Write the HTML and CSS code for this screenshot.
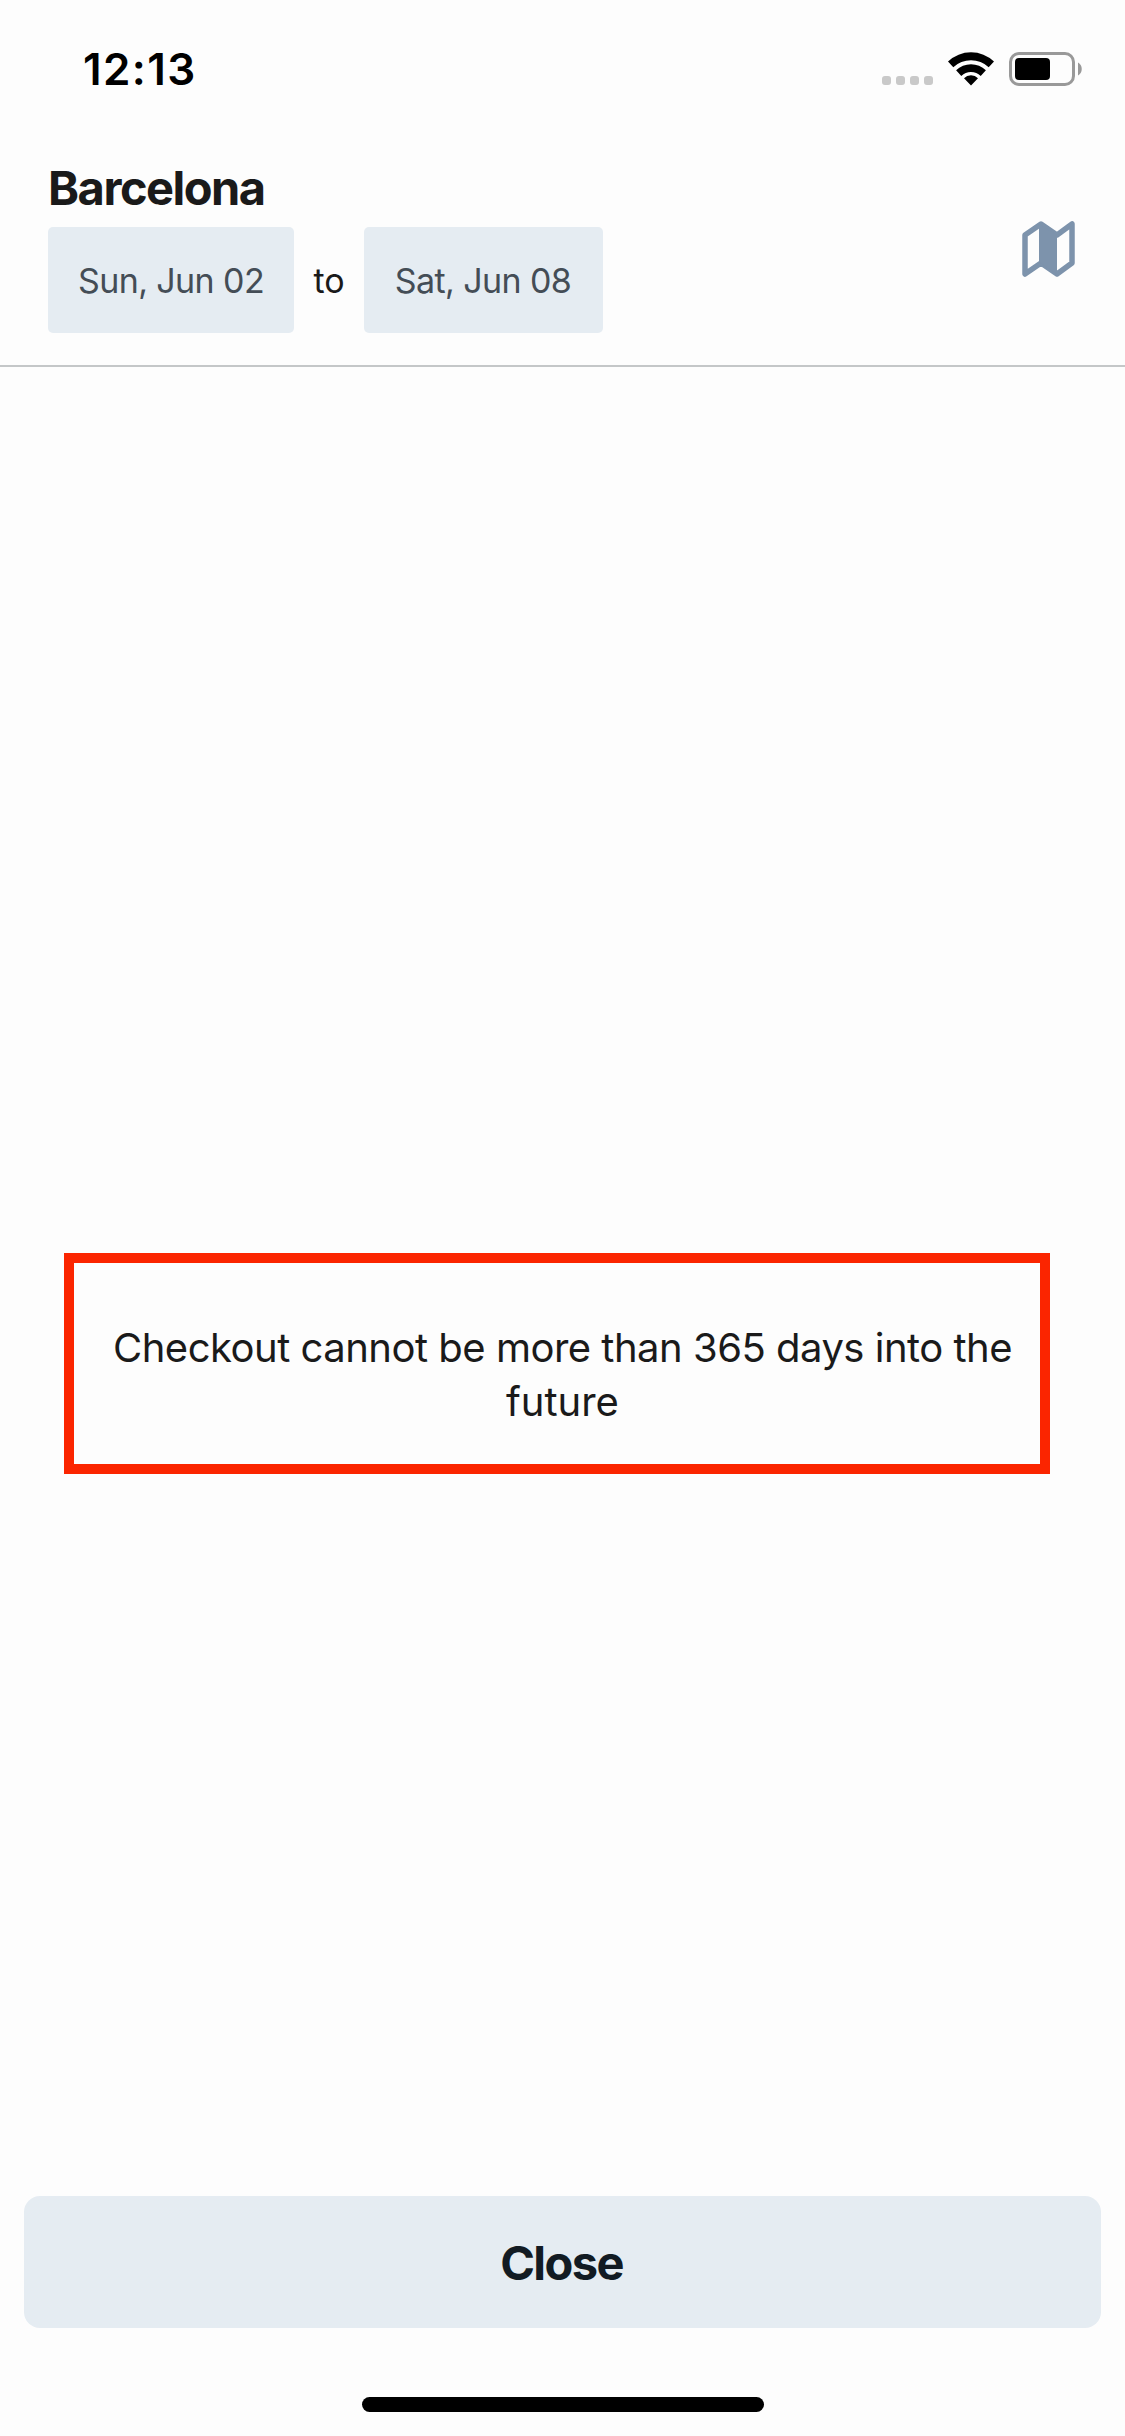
FILE: index.html
```html
<!DOCTYPE html>
<html lang="en">
<head>
<meta charset="utf-8">
<title>Barcelona</title>
<link rel="stylesheet" href="styles.css">
</head>
<body>
<div class="screen">
  <div class="status">
    <span class="time">12:13</span>
    <svg class="status-icons" width="204" height="38" viewBox="0 0 204 38" aria-hidden="true">
      <g fill="#c9c9c9">
        <rect x="0" y="26" width="9" height="9" rx="3"/>
        <rect x="14" y="26" width="9" height="9" rx="3"/>
        <rect x="28" y="26" width="9" height="9" rx="3"/>
        <rect x="42" y="26" width="9" height="9" rx="3"/>
      </g>
      <path d="M66 11.500A33.500 33.500 0 0 1 112 11.500L106.700 17.300A25.700 25.700 0 0 0 71.300 17.300ZM74.100 20.300A21.500 21.500 0 0 1 103.900 20.300L98.700 25.900A14 14 0 0 0 79.300 25.900ZM82 28.200A9.700 9.700 0 0 1 96 28.200L89 35.500Z" fill="#000"/>
      <rect x="128.500" y="3.500" width="63" height="31" rx="8.500" fill="none" stroke="#999" stroke-width="3"/>
      <rect x="133" y="8" width="35" height="22" rx="4" fill="#000"/>
      <path d="M196 12.500C201 15 201 23 196 25.500Z" fill="#999"/>
    </svg>
  </div>
  <header class="header">
    <div class="search">
      <h1 class="city">Barcelona</h1>
      <div class="dates">
        <span class="chip chip-from"><span>Sun, Jun 02</span></span>
        <span class="to">to</span>
        <span class="chip chip-until"><span>Sat, Jun 08</span></span>
      </div>
    </div>
    <svg class="map" width="54" height="58" viewBox="0 0 54 58" aria-hidden="true">
      <path d="M3 15L19 4L35 15L50 4V43L35 54L19 43L3 54Z" fill="none" stroke="#7d93ac" stroke-width="5.500" stroke-linejoin="round"/>
      <path d="M17 4L35 15V54L17 42Z" fill="#7d93ac"/>
    </svg>
  </header>
  <main class="content">
    <p class="message">Checkout cannot be more than 365 days into the<br><span class="last">future</span></p>
  </main>
  <footer class="footer">
    <button class="close" type="button">Close</button>
    <div class="home"></div>
  </footer>
</div>
</body>
</html>
```
FILE: styles.css
```css
* { box-sizing: border-box; }
body { margin: 0; background: #fdfdfd; font-family: Inter, "Liberation Sans", sans-serif; color: #1a1a1a; }
.screen { display: flex; flex-direction: column; height: 2436px; width: 1125px; }
.status { display: flex; justify-content: space-between; height: 132px; padding: 50px 39px 0 83px; }
.status-icons { flex: none; }
.time { font-size: 44px; font-weight: 600; line-height: 38px; letter-spacing: 1.4px; color: #000; }
.header { display: flex; justify-content: space-between; height: 235px; padding: 28px 49px 0 48px; border-bottom: 2px solid #c4c7c8; }
.city { margin: 0; font-size: 47px; font-weight: 700; line-height: 56px; height: 67px; letter-spacing: -1.5px; }
.dates { display: flex; align-items: center; height: 106px; font-size: 34px; }
.chip { display: flex; align-items: center; justify-content: center; height: 106px; border-radius: 5px; background: #e5ecf2; color: #444d56; letter-spacing: -0.6px; }
.chip-from { width: 246px; }
.chip-until { width: 239px; padding-right: 1px; }
.to { width: 70px; text-align: center; color: #1a1a1a; }
.map { margin-top: 60px; flex: none; }
.content { flex: 1; padding: 886px 75px 0 64px; }
.message { margin: 0; height: 221px; padding: 58px 0 0 11px; border: 10px solid #fb2500; text-align: center; font-size: 40px; line-height: 54px; letter-spacing: -0.5px; white-space: nowrap; }
.last { letter-spacing: 0; }
.footer { display: flex; flex-direction: column; align-items: center; height: 240px; padding: 0 24px; }
.close { width: 100%; height: 132px; padding: 0 2px 0 0; border: 0; border-radius: 16px; background: #e5ecf2; color: #121b23; font: 700 47px/134px Inter, "Liberation Sans", sans-serif; letter-spacing: -1.6px; }
.home { width: 402px; height: 15px; margin-top: 69px; border-radius: 8px; background: #000; }
```
